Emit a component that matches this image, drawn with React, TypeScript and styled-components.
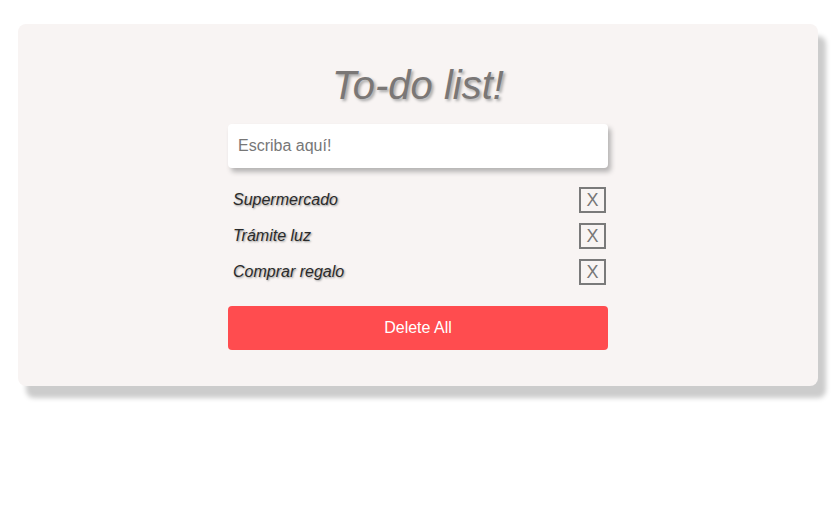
import React, { useState } from 'react'
import styled, { createGlobalStyle } from 'styled-components';

const GlobalStyle = createGlobalStyle`
  body {
    margin: 0;
    background: #ffffff;
    font-family: "Liberation Sans", Arial, sans-serif;
  }
`

type Todo = {
  id: number,
  todo: string
}

const App = () => {
  const [todos, setTodos] = useState<Todo[]>([
    { id: 1, todo: 'Supermercado' },
    { id: 2, todo: 'Trámite luz' },
    { id: 3, todo: 'Comprar regalo' },
  ]);
  const [text, setText] = useState<string>('');

  const handleAdd = (e: React.FormEvent) => {
    e.preventDefault();
    if (!text.trim()) return;
    setTodos([...todos, { id: Date.now(), todo: text }]);
    setText('');
  }

  const handleDelete = (id: number) => {
    setTodos(todos.filter((todo) => todo.id !== id));
  }

  return (
    <Page>
      <GlobalStyle />
      <Card>
        <Title>To-do list!</Title>
        <Content>
          <form onSubmit={handleAdd}>
            <Input placeholder="Escriba aquí!" value={text} onChange={(e) => setText(e.target.value)} />
          </form>
          <List>
            {todos.map((todo) => (
              <Row key={todo.id}>
                <ItemText>{todo.todo}</ItemText>
                <RemoveButton onClick={() => handleDelete(todo.id)}>X</RemoveButton>
              </Row>
            ))}
          </List>
          <DeleteAll onClick={() => setTodos([])}>Delete All</DeleteAll>
        </Content>
      </Card>
    </Page>
  )
}

const Page = styled.div`
  min-height: 100vh;
  box-sizing: border-box;
  padding: 24px 0 40px 18px;
`

const Card = styled.div`
  width: 800px;
  box-sizing: border-box;
  background-color: #f8f4f3;
  border-radius: 8px;
  box-shadow: 8px 12px 5px #cccccc;
  padding: 38px 0 36px;
  display: flex;
  flex-direction: column;
  align-items: center;
`

const Title = styled.h1`
  margin: 0 0 16px;
  font-size: 40px;
  line-height: 46px;
  font-style: italic;
  font-weight: normal;
  color: #7a7776;
  text-shadow: 2px 2px 3px #a5a5a5;
  height: 46px;
`

const Content = styled.div`
  width: 380px;
  display: flex;
  flex-direction: column;
`

const Input = styled.input`
  display: block;
  width: 100%;
  height: 44px;
  box-sizing: border-box;
  border: none;
  border-radius: 4px;
  padding: 0 10px;
  font-family: "Liberation Sans", Arial, sans-serif;
  font-size: 16px;
  color: #333;
  background: #ffffff;
  box-shadow: 3px 4px 5px #b5b3b3;

  &::placeholder {
    color: #777;
  }

  &:focus {
    outline: none;
  }
`

const List = styled.div`
  margin-top: 19px;
  display: flex;
  flex-direction: column;
  gap: 10px;
`

const Row = styled.div`
  display: flex;
  align-items: center;
  justify-content: space-between;
  height: 26px;
  padding: 0 2px 0 5px;
`

const ItemText = styled.span`
  font-size: 16px;
  font-style: italic;
  color: #2a2a2a;
  text-shadow: 1px 1px 2px #999;
`

const RemoveButton = styled.button`
  width: 27px;
  height: 26px;
  box-sizing: border-box;
  padding: 0;
  border: 2px solid #7a7a7a;
  background: #f8f4f3;
  color: #777;
  font-family: "Liberation Sans", Arial, sans-serif;
  font-size: 18px;
  font-weight: 300;
  line-height: 22px;
  cursor: pointer;
`

const DeleteAll = styled.button`
  margin-top: 21px;
  width: 100%;
  height: 44px;
  border: none;
  border-radius: 4px;
  background-color: #ff4c4f;
  color: #ffffff;
  font-family: "Liberation Sans", Arial, sans-serif;
  font-size: 16px;
  cursor: pointer;
`

export default App;
